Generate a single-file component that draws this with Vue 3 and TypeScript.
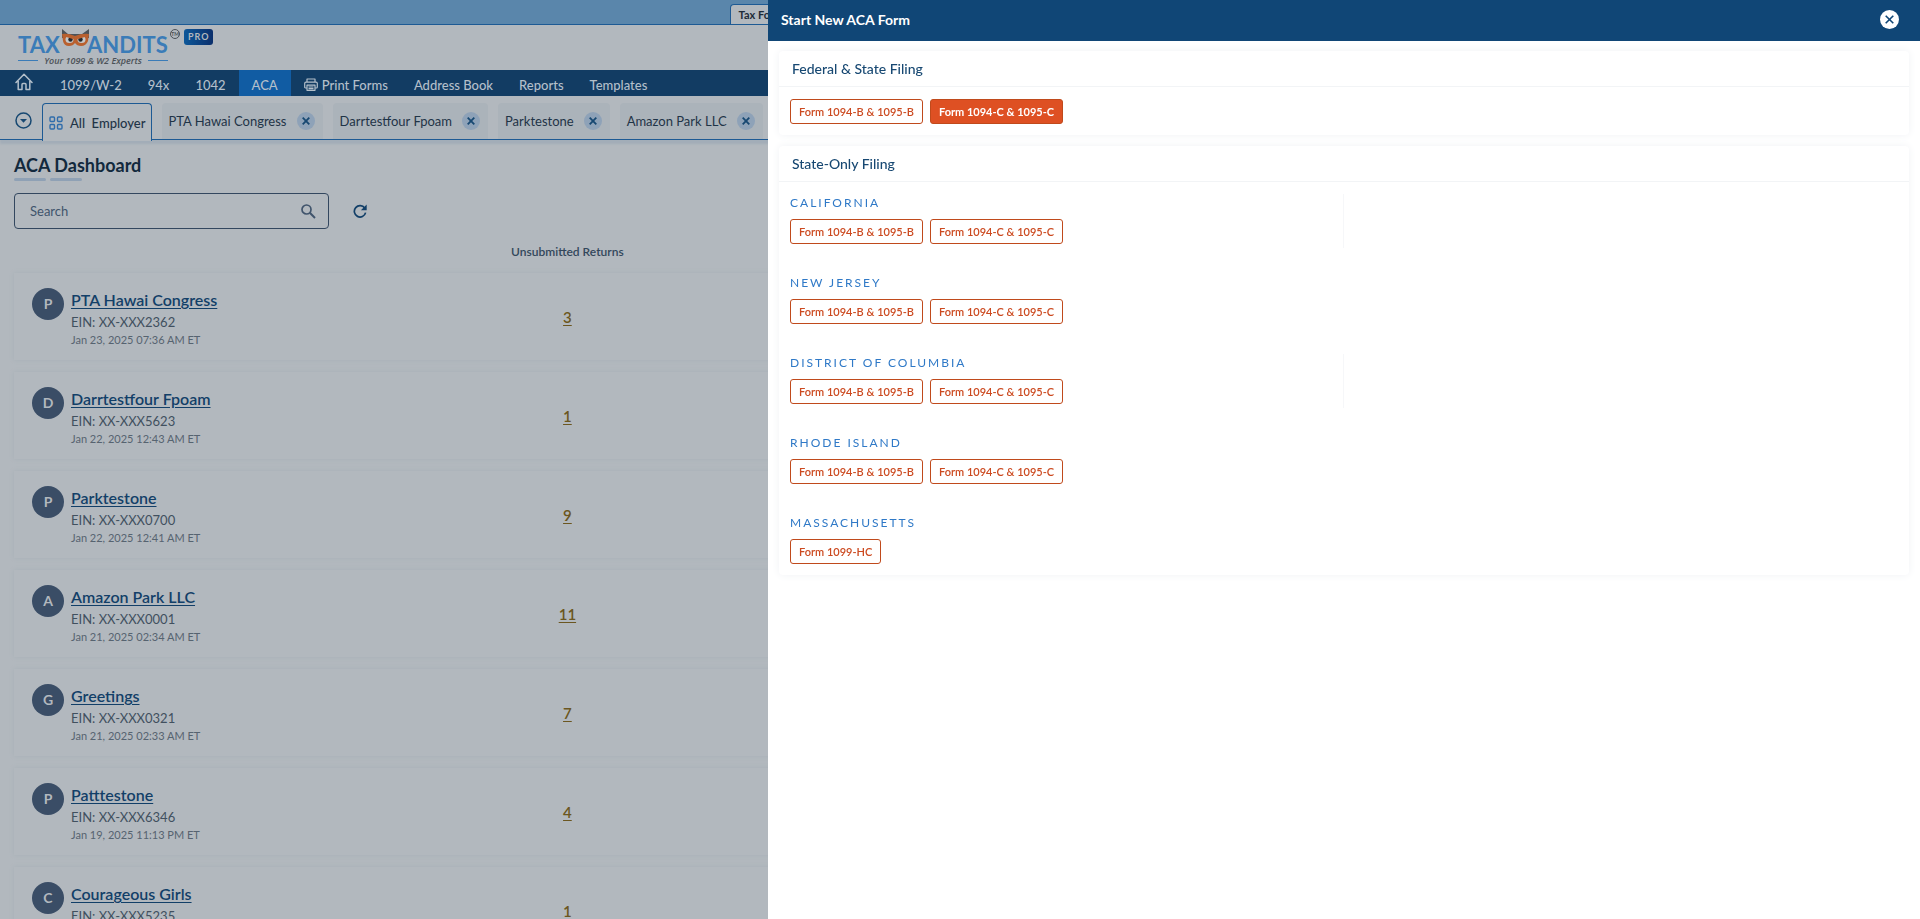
<script setup lang="ts">
import { ref } from 'vue'

interface Employer {
  name: string
  ein: string
  date: string
  returns: number
}

interface StateFiling {
  state: string
  forms: string[]
  divided?: boolean
}

const employers: Employer[] = [
  { name: 'PTA Hawai Congress', ein: 'XX-XXX2362', date: 'Jan 23, 2025 07:36 AM ET', returns: 3 },
  { name: 'Darrtestfour Fpoam', ein: 'XX-XXX5623', date: 'Jan 22, 2025 12:43 AM ET', returns: 1 },
  { name: 'Parktestone', ein: 'XX-XXX0700', date: 'Jan 22, 2025 12:41 AM ET', returns: 9 },
  { name: 'Amazon Park LLC', ein: 'XX-XXX0001', date: 'Jan 21, 2025 02:34 AM ET', returns: 11 },
  { name: 'Greetings', ein: 'XX-XXX0321', date: 'Jan 21, 2025 02:33 AM ET', returns: 7 },
  { name: 'Patttestone', ein: 'XX-XXX6346', date: 'Jan 19, 2025 11:13 PM ET', returns: 4 },
  { name: 'Courageous Girls', ein: 'XX-XXX5235', date: '', returns: 1 },
]

const navItems: string[] = ['1099/W-2', '94x', '1042', 'ACA', 'Print Forms', 'Address Book', 'Reports', 'Templates']
const openTabs = employers.slice(0, 4).map((e) => e.name)

const formB = 'Form 1094-B & 1095-B'
const formC = 'Form 1094-C & 1095-C'
const federalForms: string[] = [formB, formC]
const selected = ref(formC)

const states: StateFiling[] = [
  { state: 'California', forms: [formB, formC], divided: true },
  { state: 'New Jersey', forms: [formB, formC] },
  { state: 'District of Columbia', forms: [formB, formC], divided: true },
  { state: 'Rhode Island', forms: [formB, formC] },
  { state: 'Massachusetts', forms: ['Form 1099-HC'] },
]

const search = ref('')
</script>

<template>
  <div class="page">
    <div class="topband">
      <a class="top-tab" href="#">Tax Forms</a>
    </div>

    <header class="brand">
      <svg class="logo" width="166" height="42" viewBox="0 0 166 42" role="img" aria-label="TaxBandits">
        <g class="logo-word">
          <text x="0" y="24">TAX</text>
          <text x="69" y="24">ANDITS</text>
        </g>
        <path d="M44 9 L44 0 L50 5 H64 L71 0 L71 9 Z" fill="#4c5258" />
        <path d="M44 5 Q50 4 57 7 Q64 4 71 5 L70 12 Q68 17 63 17 Q59 17 57 14 Q55 17 51 17 Q46 17 45 12 Z" fill="#b9602f" />
        <ellipse cx="51.500" cy="10.500" rx="4" ry="3.500" fill="#c5c8ca" />
        <ellipse cx="63.500" cy="10.500" rx="4" ry="3.500" fill="#c5c8ca" />
        <circle cx="52.500" cy="10.500" r="2.200" fill="#23282d" />
        <circle cx="62.500" cy="10.500" r="2.200" fill="#23282d" />
        <path d="M46 6 L56 9 M69 6 L59 9" stroke="#b9602f" stroke-width="2.400" />
        <circle cx="157" cy="5" r="4.500" fill="none" stroke="#4c5258" />
        <text class="logo-tm" x="157" y="7" text-anchor="middle">TM</text>
        <path d="M0 31.500 H20 M130 31.500 H150" stroke="#3b7cb8" />
        <text class="logo-tag" x="75" y="35" text-anchor="middle">Your 1099 &amp; W2 Experts</text>
      </svg>
      <span class="pro">PRO</span>
    </header>

    <nav class="nav" aria-label="Main">
      <a class="nav-home" href="#" aria-label="Home">
        <svg width="18" height="18" viewBox="0 0 18 18" fill="none" stroke="#b3bfca" stroke-width="1.500" stroke-linejoin="round" stroke-linecap="round">
          <path d="M1 9.500 L9 1.200 L17 9.500 M3.200 8 V16.500 H7 V11.500 Q7 10.500 8 10.500 H10 Q11 10.500 11 11.500 V16.500 H14.800 V8" />
        </svg>
      </a>
      <a v-for="item in navItems" :key="item" class="nav-item" :class="{ active: item === 'ACA' }" href="#">
        <svg v-if="item === 'Print Forms'" width="14" height="13" viewBox="0 0 14 13" fill="none" stroke="#b3bfca" stroke-width="1.200" stroke-linejoin="round">
          <path d="M3 4 V1 H11 V4 M3 10 H1.500 Q.700 10 .700 9 V5.500 Q.700 4.200 2 4.200 H12 Q13.300 4.200 13.300 5.500 V9 Q13.300 10 12.500 10 H11 M3 7.200 H11 V12.300 H3 Z M4.500 9 H9.500 M4.500 10.700 H9.500" />
        </svg>
        <span>{{ item }}</span>
      </a>
    </nav>

    <div class="tabs">
      <button class="tabs-menu" type="button" aria-label="All open employers">
        <svg width="17" height="17" viewBox="0 0 17 17">
          <circle cx="8.500" cy="8.500" r="7.500" fill="none" stroke="#174872" stroke-width="1.500" />
          <path d="M5 7 H12 L8.500 10.800 Z" fill="#174872" />
        </svg>
      </button>
      <a class="tab-all" href="#">
        <svg width="14" height="14" viewBox="0 0 14 14" fill="none" stroke="#2f6cab" stroke-width="1.400">
          <rect x="1" y="1" width="4.500" height="4.500" rx="1" />
          <rect x="8.500" y="1" width="4.500" height="4.500" rx="1" />
          <rect x="1" y="8.500" width="4.500" height="4.500" rx="1" />
          <rect x="8.500" y="8.500" width="4.500" height="4.500" rx="1" />
        </svg>
        <span>All&nbsp; Employer</span>
      </a>
      <div v-for="tab in openTabs" :key="tab" class="tab">
        <a href="#">{{ tab }}</a>
        <button type="button" class="tab-close" :aria-label="'Close ' + tab">
          <svg width="8" height="8" viewBox="0 0 8 8" stroke="#174872" stroke-width="1.800">
            <path d="M.700 .700 L7.300 7.300 M7.300 .700 L.700 7.300" />
          </svg>
        </button>
      </div>
    </div>

    <main class="content">
      <h1>ACA Dashboard</h1>
      <div class="bars"><i></i><i></i></div>

      <div class="tools">
        <div class="search">
          <input v-model="search" type="text" placeholder="Search" aria-label="Search" />
          <svg width="15" height="15" viewBox="0 0 15 15" fill="none" stroke="#40546c" stroke-width="1.700">
            <circle cx="5.500" cy="5.500" r="4.500" />
            <path d="M8.800 8.800 L14 14" stroke-width="2" />
          </svg>
        </div>
        <button class="refresh" type="button" aria-label="Refresh">
          <svg width="14" height="14" viewBox="0 0 14 14">
            <path d="M11.700 4 A5.700 5.700 0 1 0 12.600 8.600" fill="none" stroke="#123f68" stroke-width="1.700" />
            <path d="M13.700 .500 V6.300 H7.900 Z" fill="#123f68" />
          </svg>
        </button>
      </div>

      <table class="employers">
        <colgroup>
          <col class="col-name" />
          <col class="col-returns" />
          <col />
        </colgroup>
        <thead>
          <tr>
            <th></th>
            <th>Unsubmitted Returns</th>
            <th></th>
          </tr>
        </thead>
        <tbody>
          <tr v-for="e in employers" :key="e.name">
            <td>
              <div class="employer">
                <span class="avatar">{{ e.name[0] }}</span>
                <div>
                  <a class="name" href="#">{{ e.name }}</a>
                  <div class="ein">EIN: {{ e.ein }}</div>
                  <div v-if="e.date" class="date">{{ e.date }}</div>
                </div>
              </div>
            </td>
            <td class="count"><a href="#">{{ e.returns }}</a></td>
            <td></td>
          </tr>
        </tbody>
      </table>
    </main>
  </div>

  <aside class="drawer" role="dialog" aria-labelledby="drawer-title">
    <div class="drawer-head">
      <h2 id="drawer-title">Start New ACA Form</h2>
      <button type="button" class="drawer-close" aria-label="Close">
        <svg width="9" height="9" viewBox="0 0 9 9" stroke="#104676" stroke-width="1.600">
          <path d="M.700 .700 L8.300 8.300 M8.300 .700 L.700 8.300" />
        </svg>
      </button>
    </div>
    <div class="drawer-body">
      <section class="card">
        <h3>Federal &amp; State Filing</h3>
        <div class="forms federal">
          <button
            v-for="f in federalForms"
            :key="f"
            type="button"
            class="form-btn"
            :class="{ selected: f === selected }"
            @click="selected = f"
          >{{ f }}</button>
        </div>
      </section>
      <section class="card">
        <h3>State-Only Filing</h3>
        <div class="states">
          <div v-for="s in states" :key="s.state" class="state" :class="{ divided: s.divided }">
            <h4>{{ s.state }}</h4>
            <div class="forms">
              <button v-for="f in s.forms" :key="f" type="button" class="form-btn">{{ f }}</button>
            </div>
          </div>
        </div>
      </section>
    </div>
  </aside>
</template>

<style>
body {
  background: #b2b8be;
  overflow: hidden;
}
</style>

<style scoped>
.page,
.drawer {
  font-family: Lato, 'Liberation Sans', sans-serif;
}

.page *,
.drawer * {
  box-sizing: border-box;
}

button,
input {
  font-family: inherit;
  padding: 0;
  border: 0;
  background: none;
}

h1,
h2,
h3,
h4 {
  margin: 0;
}

.page {
  height: 100vh;
  overflow: hidden;
  background: #b2b8be;
}

.page a {
  color: inherit;
  text-decoration: none;
}

svg {
  display: block;
  flex: none;
}

.topband {
  display: flex;
  align-items: flex-end;
  height: 25px;
  padding-left: 38%;
  background: #5a86ab;
  border-bottom: 1px solid #1d5a94;
}

.page .top-tab {
  height: 20px;
  padding: 0 8px;
  border: 1px solid #1d5a94;
  border-bottom: 0;
  border-radius: 4px 4px 0 0;
  background: #b2b8be;
  color: #1d2b38;
  font-size: 11px;
  font-weight: 700;
  line-height: 19px;
}

.brand {
  display: flex;
  height: 45px;
  padding: 4px 18px 0;
}

.logo {
  overflow: visible;
}

.logo-word {
  font-size: 22px;
  font-weight: 700;
  fill: #3b7cb8;
}

.logo-tag {
  font-family: 'Open Sans', sans-serif;
  font-size: 9px;
  font-style: italic;
  font-weight: 600;
  fill: #4c5258;
}

.logo-tm {
  font-size: 5px;
  font-weight: 700;
  fill: #4c5258;
}

.pro {
  height: 16px;
  padding: 0 3px 0 4px;
  border-radius: 3px;
  background: linear-gradient(90deg, #0d5799, #0b2f6c);
  color: #b2b8be;
  font-size: 9px;
  font-weight: 700;
  letter-spacing: 1px;
  line-height: 16px;
}

.nav {
  display: flex;
  height: 26px;
  background: #123c63;
  color: #b3bfca;
  font-size: 13px;
  font-weight: 500;
}

.nav-home {
  display: flex;
  align-items: flex-start;
  padding: 3px 14px 0 15px;
}

.nav-item {
  display: flex;
  align-items: center;
  gap: 4px;
  padding: 3px 13px 0;
}

.nav-item.active {
  background: #115ca3;
}

.tabs {
  display: flex;
  gap: 10px;
  height: 44px;
  padding: 7px 0 0 15px;
  border-bottom: 1px solid #1d5a94;
  box-shadow: 0 4px 2px #a2adb8;
  color: #1f3447;
  font-size: 13px;
}

.tabs-menu {
  display: flex;
  padding-top: 9px;
}

.tab-all {
  display: flex;
  align-items: center;
  gap: 7px;
  height: 38px;
  padding: 0 5px 0 6px;
  border: 1px solid #1d5a94;
  border-bottom: 0;
  border-radius: 4px 4px 0 0;
  background: #b2b8be;
  font-weight: 500;
}

.tab {
  display: flex;
  align-items: center;
  gap: 10px;
  height: 36px;
  padding: 0 8px 0 7px;
  border-radius: 4px 4px 0 0;
  background: #abb3ba;
}

.tab-close {
  display: flex;
  align-items: center;
  justify-content: center;
  width: 18px;
  height: 18px;
  border-radius: 50%;
  background: #8ea2b8;
}

.content {
  padding: 13px 14px 0;
}

h1 {
  color: #12293d;
  font-size: 18px;
  font-weight: 700;
  line-height: 24px;
}

.bars {
  display: flex;
  gap: 4px;
  padding-top: 1px;
}

.bars i {
  width: 32px;
  height: 3px;
  border-radius: 2px;
  background: #8fa1b5;
}

.tools {
  display: flex;
  align-items: center;
  gap: 24px;
  padding-top: 12px;
}

.search {
  display: flex;
  align-items: center;
  width: 315px;
  height: 36px;
  padding: 0 12px 0 15px;
  border: 1px solid #33475f;
  border-radius: 4px;
}

.search input {
  flex: 1;
  min-width: 0;
  outline: 0;
  color: #33475f;
  font-size: 13px;
}

.search input::placeholder {
  color: #40546c;
  opacity: 1;
}

.refresh {
  display: flex;
}

.employers {
  width: 100%;
  table-layout: fixed;
  border-spacing: 0 12px;
}

.col-name {
  width: 22%;
}

.col-returns {
  width: 14.5%;
}

th {
  height: 20px;
  padding: 0;
  color: #33475b;
  font-size: 12px;
  font-weight: 600;
}

tbody tr {
  box-shadow: 0 0 4px #a7afb7;
}

td {
  height: 87px;
  padding: 0;
  vertical-align: middle;
}

.employer {
  display: flex;
  gap: 7px;
  height: 87px;
  padding: 15px 18px 0;
}

.avatar {
  width: 32px;
  height: 32px;
  border-radius: 50%;
  background: #3a4d66;
  color: #b2b8be;
  font-size: 14px;
  font-weight: 700;
  line-height: 32px;
  text-align: center;
}

.page .name {
  display: block;
  color: #123f68;
  font-size: 16px;
  font-weight: 600;
  line-height: 24px;
  text-decoration: underline;
  text-underline-offset: 2px;
}

.ein {
  color: #41505f;
  font-size: 13px;
  line-height: 20px;
}

.date {
  color: #566370;
  font-size: 11px;
  line-height: 16px;
}

.count {
  text-align: center;
}

.page .count a {
  color: #6b5620;
  font-size: 15px;
  font-weight: 600;
  text-decoration: underline;
  text-underline-offset: 2px;
}

.drawer {
  position: fixed;
  top: 0;
  right: 0;
  bottom: 0;
  width: 60%;
  background: #fff;
}

.drawer-head {
  display: flex;
  align-items: center;
  justify-content: space-between;
  height: 41px;
  padding: 0 21px 2px 13px;
  background: #104676;
}

.drawer-head h2 {
  color: #fff;
  font-size: 14px;
  font-weight: 700;
}

.drawer-close {
  display: flex;
  align-items: center;
  justify-content: center;
  width: 19px;
  height: 19px;
  border-radius: 50%;
  background: #fff;
}

.drawer-body {
  display: flex;
  flex-direction: column;
  gap: 11px;
  padding: 10px 11px;
}

.card {
  border-radius: 4px;
  background: #fff;
  box-shadow: 0 0 8px #f0f2f5;
}

.card h3 {
  height: 36px;
  padding-left: 13px;
  border-bottom: 1px solid #f2f4f6;
  color: #174872;
  font-size: 14px;
  font-weight: 500;
  line-height: 35px;
}

.forms {
  display: flex;
  gap: 7px;
}

.federal {
  padding: 12px 11px 11px;
}

.form-btn {
  height: 25px;
  padding: 0 8px;
  border: 1px solid #c04a1c;
  border-radius: 3px;
  background: #fff;
  color: #cc4a20;
  font-size: 11px;
  font-weight: 600;
}

.form-btn.selected {
  background: #de5023;
  color: #fff;
  font-weight: 700;
}

.states {
  padding: 12px 11px 1px;
}

.state {
  width: 50%;
  height: 54px;
  margin-bottom: 26px;
}

.state:last-child {
  margin-bottom: 6px;
}

.state.divided {
  border-right: 1px solid #f6f7f9;
}

.state h4 {
  height: 25px;
  color: #2f79c7;
  font-size: 12px;
  font-weight: 400;
  letter-spacing: 2px;
  line-height: 18px;
  text-transform: uppercase;
}
</style>
